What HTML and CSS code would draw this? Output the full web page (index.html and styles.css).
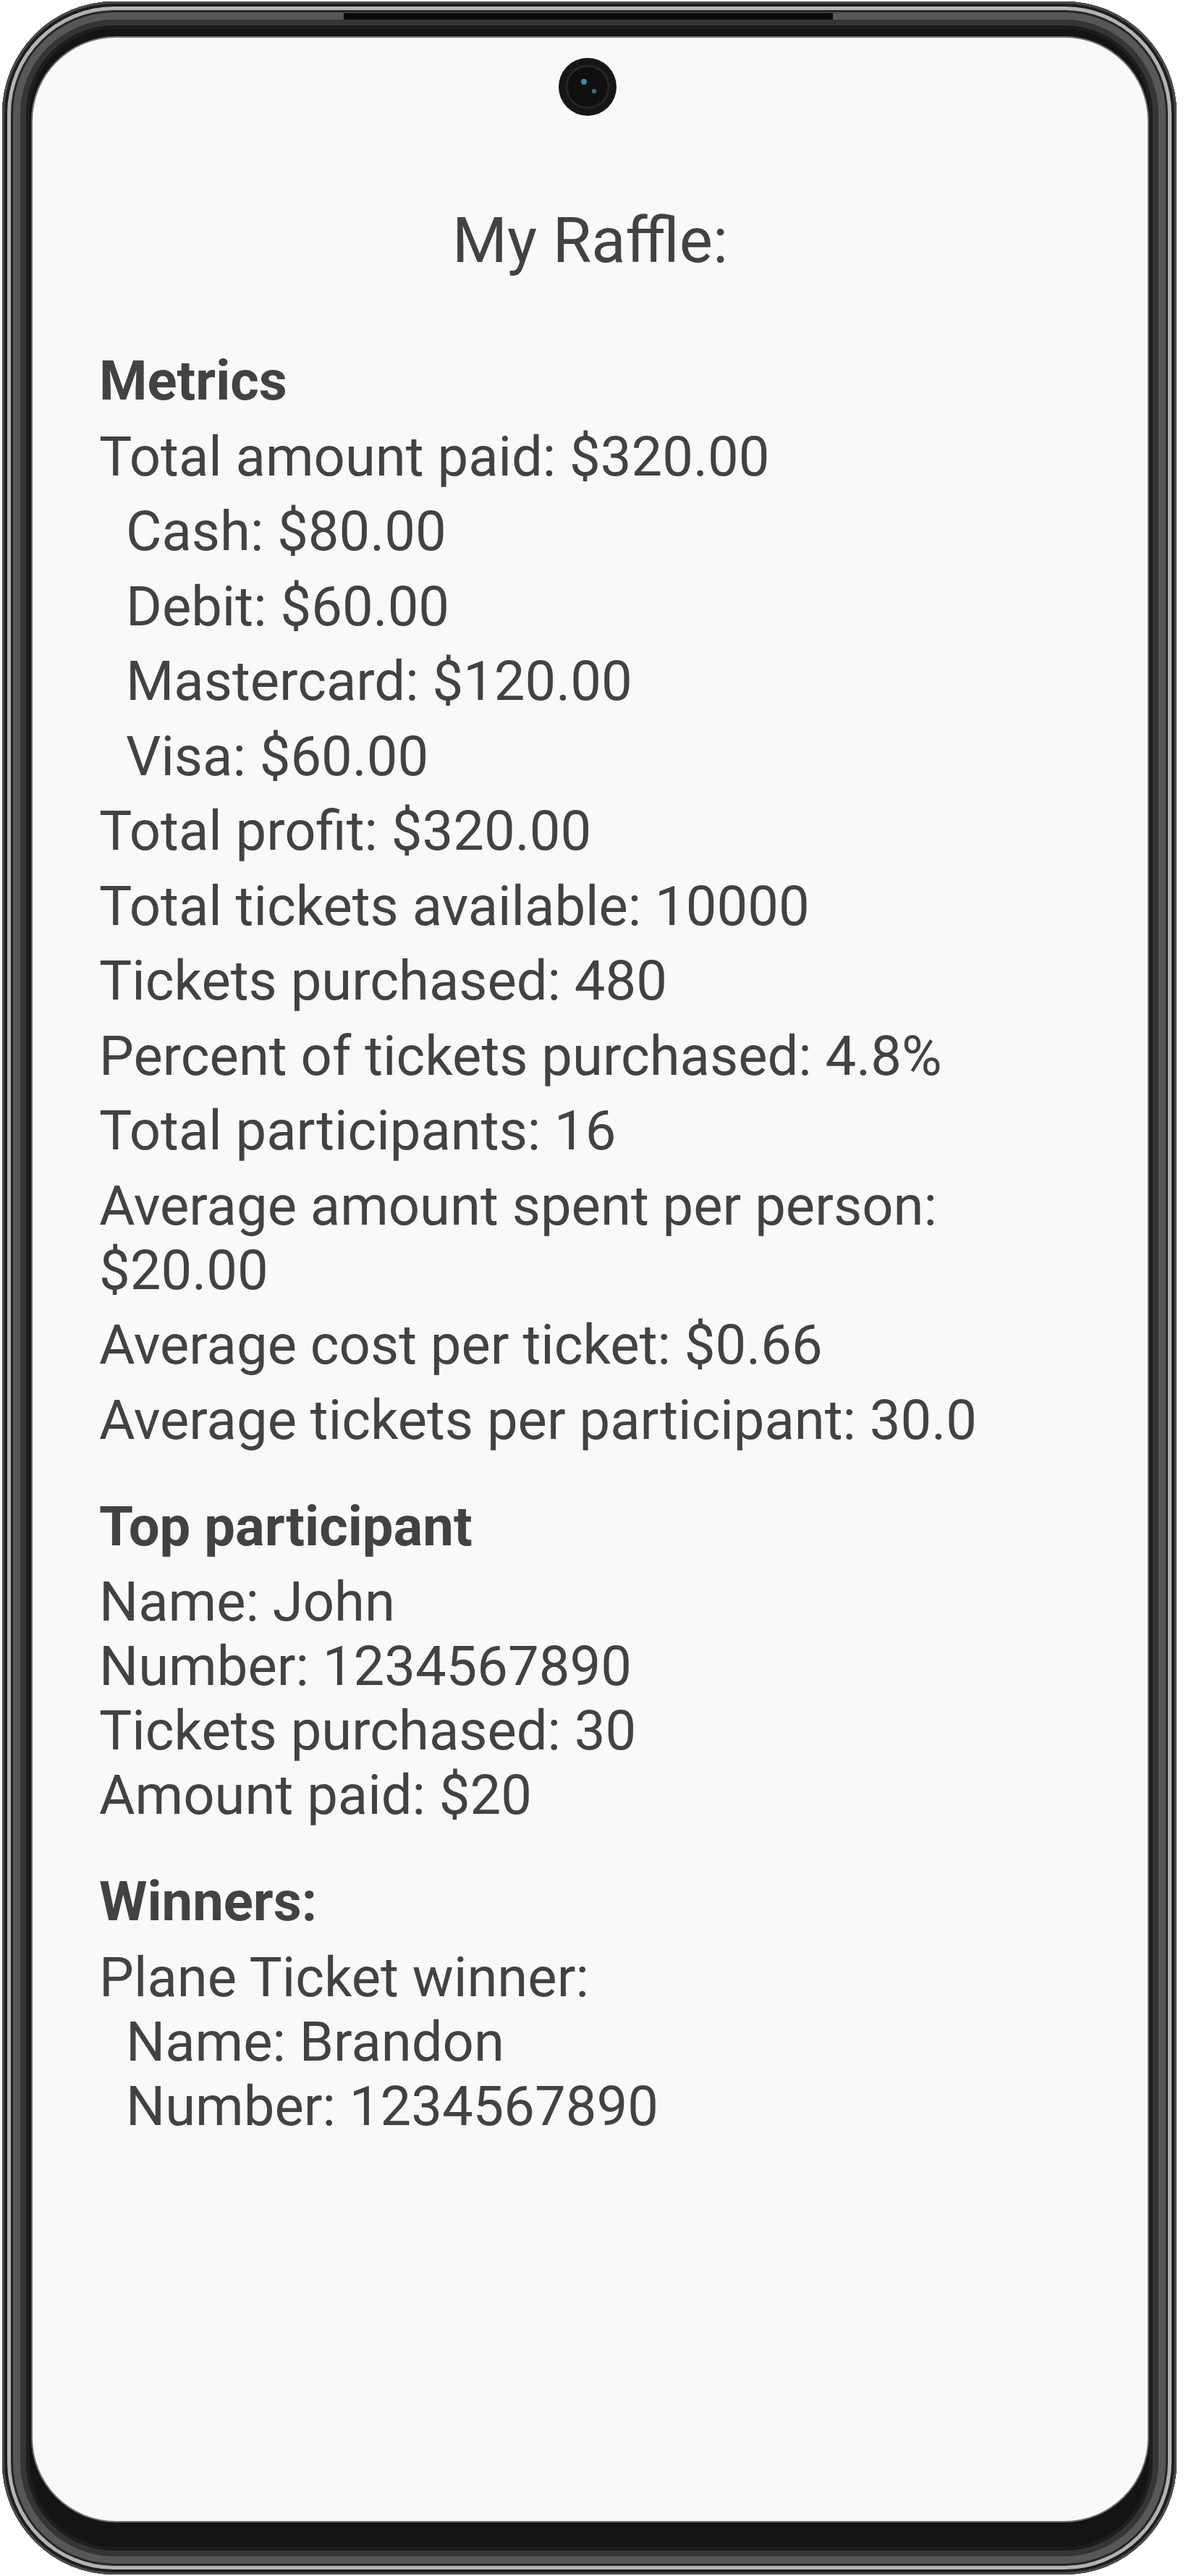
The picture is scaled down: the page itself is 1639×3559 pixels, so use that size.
FILE: index.html
```html
<!DOCTYPE html>
<html lang="en">
<head>
<meta charset="utf-8">
<title>My Raffle</title>
<link rel="stylesheet" href="styles.css">
</head>
<body>
<div class="phone">
  <div class="side-btn btn-power"></div>
  <div class="side-btn btn-vol"></div>
  <div class="antenna"></div>
  <div class="screen">
    <div class="camera">
      <svg width="80" height="80" viewBox="0 0 80 80">
        <circle cx="40" cy="40" r="40" fill="#161616"/>
        <circle cx="40" cy="40" r="29" fill="#0f0f0f" stroke="#262626" stroke-width="3"/>
        <circle cx="35" cy="33" r="4" fill="#3f8aa0"/>
        <circle cx="49" cy="46" r="3.2" fill="#2f6f80"/>
      </svg>
    </div>
    <div class="content">
      <h1 class="title">My Raffle:</h1>
      <section class="section">
        <h2 class="heading">Metrics</h2>
        <p class="line">Total amount paid: $320.00</p>
        <p class="line sub">Cash: $80.00</p>
        <p class="line sub">Debit: $60.00</p>
        <p class="line sub">Mastercard: $120.00</p>
        <p class="line sub">Visa: $60.00</p>
        <p class="line">Total profit: $320.00</p>
        <p class="line">Total tickets available: 10000</p>
        <p class="line">Tickets purchased: 480</p>
        <p class="line">Percent of tickets purchased: 4.8%</p>
        <p class="line">Total participants: 16</p>
        <p class="line">Average amount spent per person: $20.00</p>
        <p class="line">Average cost per ticket: $0.66</p>
        <p class="line">Average tickets per participant: 30.0</p>
      </section>
      <section class="section">
        <h2 class="heading">Top participant</h2>
        <div class="block">
          <p class="bline">Name: John</p>
          <p class="bline">Number: 1234567890</p>
          <p class="bline">Tickets purchased: 30</p>
          <p class="bline">Amount paid: $20</p>
        </div>
      </section>
      <section class="section">
        <h2 class="heading">Winners:</h2>
        <div class="block">
          <p class="bline">Plane Ticket winner:</p>
          <p class="bline sub">Name: Brandon</p>
          <p class="bline sub">Number: 1234567890</p>
        </div>
      </section>
    </div>
  </div>
</div>
</body>
</html>
```

FILE: styles.css
```css
* { box-sizing: border-box; }

html, body {
  margin: 0;
  padding: 0;
  background: #ffffff;
}

body {
  font-family: Roboto, "Noto Sans", "Liberation Sans", sans-serif;
  color: #424242;
}

.phone {
  position: relative;
  width: 1623px;
  height: 3555px;
  margin: 2px 0 0 3px;
  padding: 50px 40px 74px 42px;
  border-radius: 155px;
  background: #141414;
  box-shadow:
    inset 0 0 0 3px #4b4b4b,
    inset 0 0 0 7px #1e1e1e,
    inset 0 0 0 12px #b3b3b3,
    inset 0 0 0 15px #262626,
    inset 0 0 0 25px #575757,
    inset 0 0 0 33px #353535,
    inset 0 0 0 38px #1e1e1e;
}

.antenna {
  position: absolute;
  top: 16px;
  left: 472px;
  width: 676px;
  height: 9px;
  background: #0b0b0b;
}

.side-btn {
  position: absolute;
  right: -12px;
  width: 18px;
  z-index: -1;
  border-radius: 3px;
  background: linear-gradient(to right, #555 0, #1a1a1a 35%, #1a1a1a 55%, #8a8a8a 70%, #7a7a7a 100%);
  box-shadow: inset 0 0 0 1px #6a6a6a;
}

.btn-power {
  top: 736px;
  height: 403px;
}

.btn-vol {
  top: 1421px;
  height: 216px;
}

.screen {
  position: relative;
  height: 100%;
  border-radius: 115px;
  background: #f9f9f9;
  box-shadow: 0 0 0 2px #6e6e6e;
  overflow: hidden;
}

.camera {
  position: absolute;
  top: 28px;
  left: 727px;
  width: 80px;
  height: 80px;
}

.camera svg {
  display: block;
}

.content {
  padding: 229px 60px 0 92px;
}

.title {
  margin: 0 0 99px;
  font-size: 87px;
  font-weight: 400;
  line-height: 102px;
  text-align: center;
  padding-right: 32px;
}

.section {
  display: flex;
  flex-direction: column;
  gap: 14.5px;
  margin-bottom: 58px;
}

.heading {
  margin: 0 0 1px;
  font-size: 76px;
  font-weight: 700;
  line-height: 89px;
}

.line {
  margin: 0;
  font-size: 76px;
  line-height: 89px;
}

.block {
  display: flex;
  flex-direction: column;
}

.bline {
  margin: 0;
  font-size: 76px;
  line-height: 89px;
}

.sub {
  padding-left: 37px;
}
```
